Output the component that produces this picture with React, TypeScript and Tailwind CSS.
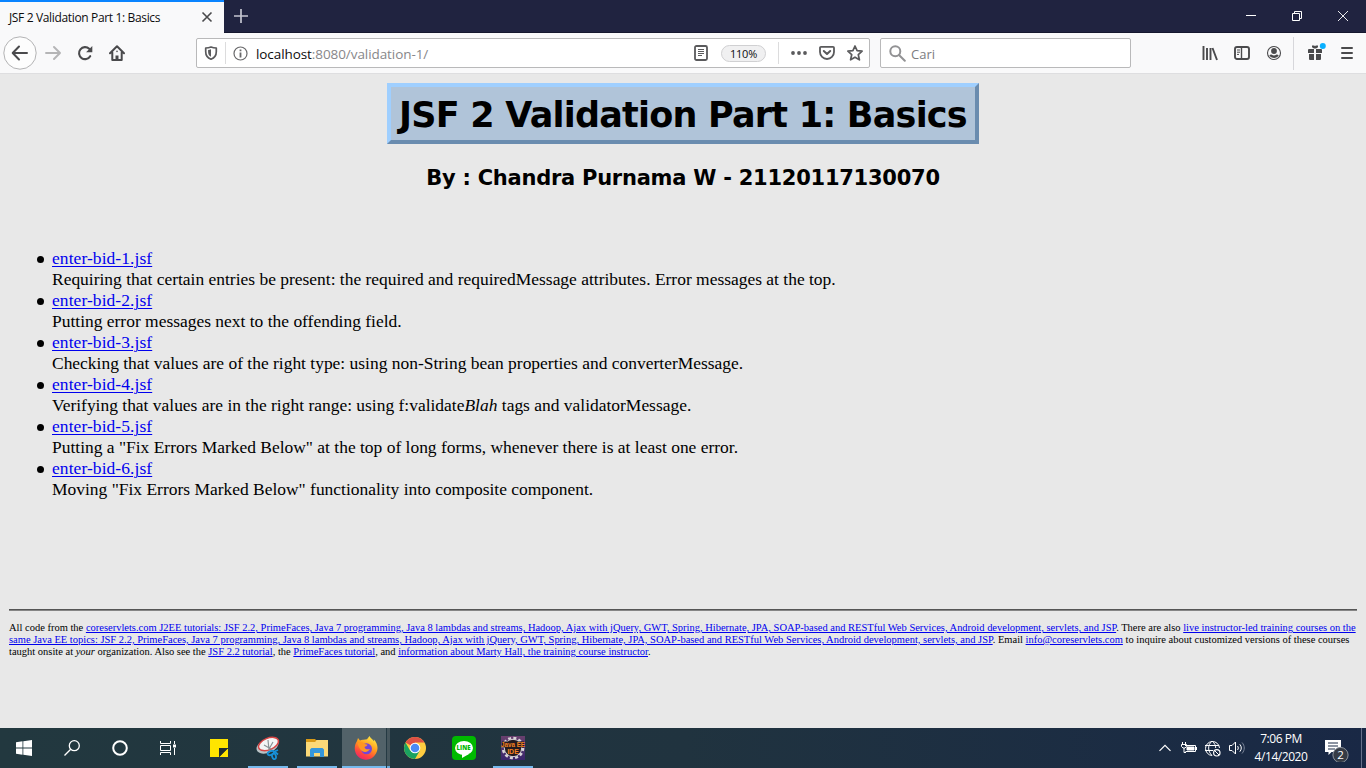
import React from "react";

const PAGE_FONT = "font-['Liberation_Serif',serif]";
const UI_FONT = "font-['Open_Sans','Noto_Sans',sans-serif]";

function Link({ offset = "underline-offset-2", children }: { offset?: string; children: React.ReactNode }) {
  return (
    <a href="#" className={`text-[#0000ee] underline decoration-1 ${offset}`}>
      {children}
    </a>
  );
}

function SmallLink({ children }: { children: React.ReactNode }) {
  return <Link offset="underline-offset-1">{children}</Link>;
}

function Cell({ className = "w-8", children }: { className?: string; children: React.ReactNode }) {
  return <div className={`flex h-full shrink-0 items-center justify-center ${className}`}>{children}</div>;
}

function TabStrip() {
  return (
    <header className="flex h-[33px] shrink-0 border-b border-[#15172e] bg-[#202340]">
      <div className="-mb-px flex w-[224px] items-center border-t-2 border-[#0a84ff] bg-[#f9f9fa]">
        <span className="ml-[9px] w-[190px] whitespace-nowrap pt-px text-[12px] tracking-[-0.35px] text-[#0c0c0d]">
          JSF 2 Validation Part 1: Basics
        </span>
        <svg width="16" height="16" viewBox="0 0 16 16" stroke="#4a4a4c" strokeWidth="1.6">
          <path d="M3.5 2.5l9 9M12.5 2.5l-9 9" />
        </svg>
      </div>
      <svg className="ml-[9px] mt-[8px]" width="16" height="16" viewBox="0 0 16 16" stroke="#c4c5d0" strokeWidth="1.7">
        <path d="M8 1v14M1 8h14" />
      </svg>
      <div className="ml-auto flex items-center text-white">
        <Cell className="w-[46px]">
          <svg width="10" height="10" stroke="white" fill="none"><path d="M0 4.5h10" /></svg>
        </Cell>
        <Cell className="w-[46px]">
          <svg width="10" height="10" stroke="white" fill="none"><path d="M.5 2.5h7v7h-7zM2.5 2.5v-2h7v7h-2" /></svg>
        </Cell>
        <Cell className="w-[46px]">
          <svg width="10" height="10" stroke="white" fill="none" strokeWidth=".9"><path d="M0 0l10 10M10 0L0 10" /></svg>
        </Cell>
      </div>
    </header>
  );
}

function Toolbar() {
  return (
    <nav className="flex h-[41px] shrink-0 items-center border-b border-[#dedee0] bg-[#f9f9fa] pl-1">
      <Cell className="w-[33px] pr-[2px]">
        <svg className="shrink-0" width="34" height="34" viewBox="0 0 34 34" fill="none">
          <circle cx="17" cy="17" r="16.2" fill="#fdfdfd" stroke="#b3b3b4" />
          <path d="M24 17H10.500M16 10.500L9.700 17L16 23.500" stroke="#4a4a4c" strokeWidth="2" strokeLinecap="round" strokeLinejoin="round" />
        </svg>
      </Cell>
      <Cell>
        <svg width="16" height="16" viewBox="0 0 16 16" fill="none" stroke="#b5b5b6" strokeWidth="1.9" strokeLinecap="round" strokeLinejoin="round">
          <path d="M1 8h13.500M9 2l6 6-6 6" />
        </svg>
      </Cell>
      <Cell>
        <svg width="16" height="16" viewBox="0 0 16 16" fill="none">
          <path d="M13.200 11.200A6 6 0 1 1 12.200 3.800" stroke="#4a4a4c" strokeWidth="2.100" strokeLinecap="round" />
          <path d="M15.300 1v6.200H9.100z" fill="#4a4a4c" />
        </svg>
      </Cell>
      <Cell>
        <svg width="16" height="16" viewBox="0 0 16 16" fill="none" stroke="#4a4a4c" strokeWidth="2" strokeLinecap="round" strokeLinejoin="round">
          <path d="M1 8.200L8 1.200l7 7M3.300 7.500V15h9.400V7.500" />
          <path d="M8 14V10.500" strokeWidth="3" strokeLinecap="butt" />
          <path d="M8 6.200v.3" strokeWidth="1.500" />
        </svg>
      </Cell>
      <div className="ml-[63px] flex h-[30px] w-[674px] items-center rounded-[2px] border border-[#b9b9ba] bg-white">
        <Cell className="w-7">
          <svg width="14" height="14" viewBox="0 0 14 14" fill="none" stroke="#5a5a5c">
            <path d="M7 1C5.300 1.700 3.500 2 1.700 2v3.800C1.700 9.300 3.700 12 7 13.200c3.300-1.200 5.300-3.900 5.300-7.400V2C10.500 2 8.700 1.700 7 1z" strokeWidth="1.700" strokeLinejoin="round" />
            <path d="M7 3.300v7.500C5.200 9.800 4.100 8.100 4.100 5.900V4C5.200 3.900 6.200 3.700 7 3.300z" fill="#5a5a5c" stroke="none" />
          </svg>
        </Cell>
        <div className="h-[22px] w-px bg-[#dcdcdd]" />
        <Cell className="w-7">
          <svg width="15" height="15" viewBox="0 0 15 15" fill="none" stroke="#68686a">
            <circle cx="7.500" cy="7.500" r="6.500" strokeWidth="1.200" />
            <path d="M7.500 6.500v5M7.500 3.500v1.700" strokeWidth="1.800" />
          </svg>
        </Cell>
        <span className="ml-[2px] w-[435px] whitespace-nowrap pt-[3px] text-[13.500px] tracking-[-0.08px] text-[#0c0c0d]">
          localhost<span className="text-[#87878a]">:8080/validation-1/</span>
        </span>
        <Cell className="w-5">
          <svg width="14" height="16" viewBox="0 0 14 16" fill="none" stroke="#5a5a5c">
            <rect x="1" y="1" width="12" height="14" rx="1.500" strokeWidth="1.800" />
            <path d="M4 4.500h6M4 6.500h6M4 8.500h6M4 10.500h4" />
          </svg>
        </Cell>
        <span className="ml-[10px] flex h-[17px] w-[45px] items-center justify-center rounded-full border border-[#d0d0d2] bg-[#f0f0f1] pt-[2px] text-[11px] tracking-[-0.2px] text-[#0c0c0d]">
          110%
        </span>
        <div className="ml-3 h-[22px] w-px bg-[#dcdcdd]" />
        <Cell className="ml-[6px] w-7">
          <svg width="16" height="16" viewBox="0 0 16 16" fill="#5a5a5c">
            <circle cx="2" cy="8" r="1.900" /><circle cx="8" cy="8" r="1.900" /><circle cx="14" cy="8" r="1.900" />
          </svg>
        </Cell>
        <Cell className="w-7">
          <svg width="16" height="16" viewBox="0 0 16 16" fill="none" stroke="#5a5a5c" strokeLinecap="round" strokeLinejoin="round">
            <path d="M2 1.800h12a1 1 0 0 1 1 1V7a7 7 0 0 1-14 0V2.800a1 1 0 0 1 1-1z" strokeWidth="1.800" />
            <path d="M4.800 6L8 9l3.200-3" strokeWidth="2" />
          </svg>
        </Cell>
        <Cell className="w-7">
          <svg width="16" height="16" viewBox="0 0 16 16" fill="none" stroke="#5a5a5c" strokeWidth="1.700" strokeLinejoin="round">
            <path d="M8 1l2.100 4.700 5 .5-3.800 3.500 1.100 5.100L8 12.200l-4.400 2.600 1.100-5.100L.9 6.200l5-.5z" />
          </svg>
        </Cell>
      </div>
      <div className="ml-[10px] flex h-[30px] w-[251px] items-center rounded-[2px] border border-[#b9b9ba] bg-white">
        <svg className="ml-2" width="17" height="17" viewBox="0 0 17 17" fill="none" stroke="#929294" strokeWidth="2" strokeLinecap="round">
          <circle cx="6.300" cy="6.300" r="5" /><path d="M10 10l5.800 5.800" />
        </svg>
        <span className="ml-[5px] pt-[3px] text-[13px] text-[#7c7c7f]">Cari</span>
      </div>
      <Cell className="ml-[63px] w-8">
        <svg width="16" height="16" viewBox="0 0 16 16" fill="none" stroke="#4a4a4c" strokeWidth="1.900">
          <path d="M1.500 1v14M5 3v12M8.500 3v12M10.500 3l4.500 12" />
        </svg>
      </Cell>
      <Cell>
        <svg width="16" height="16" viewBox="0 0 16 16" fill="none" stroke="#4a4a4c">
          <rect x="1" y="2" width="14" height="12" rx="2" strokeWidth="1.900" />
          <path d="M7.500 2v12" strokeWidth="1.400" /><path d="M3 5h3M3 7.200h3M3 9.400h2" />
        </svg>
      </Cell>
      <Cell>
        <svg width="16" height="16" viewBox="0 0 16 16" fill="none">
          <circle cx="8" cy="8" r="6.500" stroke="#4a4a4c" strokeWidth="1.100" />
          <circle cx="8" cy="6" r="2.900" fill="#4a4a4c" />
          <path d="M3.300 10.300c1.300-.8 1.700-.8 2.500-.5 1.300.8 3.100.8 4.400 0 .8-.3 1.200-.3 2.500.5-1.800 3.600-7.500 3.600-9.400 0z" fill="#4a4a4c" />
        </svg>
      </Cell>
      <div className="ml-[3px] h-[33px] w-px bg-[#d7d7db]" />
      <Cell className="ml-[5px] w-8">
        <svg className="overflow-visible" width="16" height="16" viewBox="0 0 16 16" fill="#4a4a4c">
          <path d="M2 4h5v4H1V5a1 1 0 0 1 1-1zM9 4h5a1 1 0 0 1 1 1v3H9zM2 9h5v6H3a1 1 0 0 1-1-1zM9 9h5v5a1 1 0 0 1-1 1H9zM5 0.500h2.200L8 1.300l.8-.8H11v1.800L9 3.500H7L5 2.300z" />
          <circle cx="15.800" cy="1" r="3" fill="#0ab0ff" />
        </svg>
      </Cell>
      <Cell>
        <svg width="12" height="14" viewBox="0 0 12 14" stroke="#4a4a4c" strokeWidth="2" strokeLinecap="round">
          <path d="M1 2h10M1 7h10M1 12h10" />
        </svg>
      </Cell>
    </nav>
  );
}

const items: { name: string; text: React.ReactNode }[] = [
  { name: "enter-bid-1.jsf", text: "Requiring that certain entries be present: the required and requiredMessage attributes. Error messages at the top." },
  { name: "enter-bid-2.jsf", text: "Putting error messages next to the offending field." },
  { name: "enter-bid-3.jsf", text: "Checking that values are of the right type: using non-String bean properties and converterMessage." },
  { name: "enter-bid-4.jsf", text: <>Verifying that values are in the right range: using f:validate<i>Blah</i> tags and validatorMessage.</> },
  { name: "enter-bid-5.jsf", text: 'Putting a "Fix Errors Marked Below" at the top of long forms, whenever there is at least one error.' },
  { name: "enter-bid-6.jsf", text: 'Moving "Fix Errors Marked Below" functionality into composite component.' },
];

function Page() {
  return (
    <main className={`flex min-h-0 flex-1 flex-col bg-[#e8e8e8] px-[9px] pt-[9px] text-black ${PAGE_FONT}`}>
      <h1 className="flex h-[61px] w-[592px] items-center justify-center self-center whitespace-nowrap border-4 border-t-[#9fcfff] border-r-[#6a8caf] border-b-[#6a8caf] border-l-[#9fcfff] bg-[#b0c4d9] pt-[3px] font-['DejaVu_Sans',sans-serif] text-[35px] font-bold tracking-[-0.78px]">
        JSF 2 Validation Part 1: Basics
      </h1>
      <h2 className="mt-[20px] h-7 self-center whitespace-nowrap font-['DejaVu_Sans',sans-serif] text-[21px] font-bold leading-7 tracking-[-0.25px]">
        By : Chandra Purnama W - 21120117130070
      </h2>
      <ul className="mt-[56px] text-[17.470px] leading-[21px]">
        {items.map((item) => (
          <li key={item.name} className="flex whitespace-nowrap">
            <span className="ml-7 mt-[8px] mr-2 h-[7px] w-[7px] shrink-0 rounded-full bg-black" />
            <div>
              <p className="tracking-[0.08px]"><Link>{item.name}</Link></p>
              <p>{item.text}</p>
            </div>
          </li>
        ))}
      </ul>
      <div className="mt-[109px] h-[2px] shrink-0 border-t border-[#555] bg-[#858585]" />
      <footer className="mt-[11px] whitespace-nowrap text-[10.490px] leading-3">
        <p>
          All code from the <SmallLink>coreservlets.com J2EE tutorials: JSF 2.2, PrimeFaces, Java 7 programming, Java 8 lambdas and streams, Hadoop, Ajax with jQuery, GWT, Spring, Hibernate, JPA, SOAP-based and RESTful Web Services, Android development, servlets, and JSP</SmallLink>. There are also <SmallLink>live instructor-led training courses on the</SmallLink>
        </p>
        <p>
          <SmallLink>same Java EE topics: JSF 2.2, PrimeFaces, Java 7 programming, Java 8 lambdas and streams, Hadoop, Ajax with jQuery, GWT, Spring, Hibernate, JPA, SOAP-based and RESTful Web Services, Android development, servlets, and JSP</SmallLink>. Email <SmallLink>info@coreservlets.com</SmallLink> to inquire about customized versions of these courses
        </p>
        <p>
          taught onsite at <i>your</i> organization. Also see the <SmallLink>JSF 2.2 tutorial</SmallLink>, the <SmallLink>PrimeFaces tutorial</SmallLink>, and <SmallLink>information about Marty Hall, the training course instructor</SmallLink>.
        </p>
      </footer>
    </main>
  );
}

function AppButton({ open = false, children }: { open?: boolean; children: React.ReactNode }) {
  return (
    <div className="flex h-10 w-[49px] shrink-0 flex-col items-center">
      <div className="flex h-[38px] items-center pt-[2px]">{children}</div>
      {open && <div className="h-[2px] w-10 bg-[#76b9ed]" />}
    </div>
  );
}

function Taskbar() {
  return (
    <footer className={`flex h-10 shrink-0 bg-linear-to-r from-[#22383f] via-[#20333f] via-50% to-[#192845] text-white ${UI_FONT}`}>
      <Cell className="w-12">
        <svg width="16" height="16" viewBox="0 0 16 16" fill="white">
          <path d="M0 2.200l6.500-.9v6.200H0zM7.300 1.200L16 0v7.500H7.300zM0 8.400h6.500v6.300L0 13.800zM7.300 8.400H16V16l-8.700-1.200z" />
        </svg>
      </Cell>
      <Cell className="w-12">
        <svg width="16" height="16" viewBox="0 0 16 16" fill="none" stroke="white" strokeWidth="1.300">
          <circle cx="10.300" cy="5.700" r="5" /><path d="M6.700 9.300L.5 15.500" />
        </svg>
      </Cell>
      <Cell className="w-12">
        <svg width="16" height="16" viewBox="0 0 16 16" fill="none" stroke="white" strokeWidth="2">
          <circle cx="8" cy="8" r="6.800" />
        </svg>
      </Cell>
      <Cell className="w-12">
        <svg width="16" height="16" viewBox="0 0 16 16" fill="none" stroke="white">
          <path d="M.5 1v2.500h10V1M.5 15v-2.500h10V15M.5 5.500h10v5H.5zM14.500 1v3M14.500 8v7" />
          <path d="M13 6h3" strokeWidth="3" />
        </svg>
      </Cell>
      <div className="ml-[2px] flex">
        <AppButton>
          <svg width="18" height="18" viewBox="0 0 18 18">
            <path d="M0 0h18v18H0z" fill="#ffe500" />
            <path d="M9 9h9v.5L9.500 18H9z" fill="#1f2d30" />
            <path d="M18 9.800V18H9.800z" fill="#ffe500" />
          </svg>
        </AppButton>
        <AppButton open>
          <svg width="24" height="24" viewBox="0 0 24 24" fill="none">
            <ellipse cx="11.500" cy="10" rx="11.500" ry="6.800" transform="rotate(-22 11.500 10)" fill="#b9c3c6" />
            <ellipse cx="12.500" cy="8" rx="10.500" ry="5.800" transform="rotate(-22 12.500 8)" fill="#f3f5f5" stroke="#d74545" strokeWidth="1.500" />
            <path d="M8 9l7 4M12 4l1 10M17 6l-4 7" stroke="#8b9396" strokeWidth="1.200" />
            <g stroke="#1790d8" strokeWidth="1.800"><ellipse cx="14.800" cy="17" rx="3.300" ry="1.900" transform="rotate(-22 14.800 17)" /><ellipse cx="18" cy="20.300" rx="1.900" ry="2.900" transform="rotate(-15 18 20.300)" /><path d="M17 16l5-2" /><path d="M18.500 15.500l3.500 3" /></g>
          </svg>
        </AppButton>
        <AppButton open>
          <svg width="22" height="20" viewBox="0 0 22 20">
            <path d="M0 2h22v16.500H0z" fill="#fbd978" /><path d="M0 1h9l1.500 1.500L9 4H0z" fill="#d99a17" />
            <path d="M4 19v-7.500L5.500 10h11l1.500 1.500V19h-4v-4H8v4z" fill="#3597db" />
          </svg>
        </AppButton>
        <div className="flex w-[49px] justify-center pl-px">
          <div className="flex h-10 w-[44px] flex-col items-center border-b-2 border-[#76b9ed] bg-[#526269] pl-[3px] pt-2">
            <svg className="shrink-0" width="24" height="24" viewBox="0 0 24 24">
              <defs>
                <linearGradient id="fox" x1=".8" y1="0" x2=".3" y2="1"><stop stopColor="#fff04a" /><stop offset=".45" stopColor="#ff9b1c" /><stop offset=".75" stopColor="#ff4a3c" /><stop offset="1" stopColor="#ef2269" /></linearGradient>
              </defs>
              <path d="M3 5l1-3 2 2.500c1-.6 2-.8 3.500-.7L13 3.200 15.500 0c.5 2 3 3.200 4.500 5.200 0-.8 0-1.400-.3-2C24 7.500 24.500 13 22 17.500 19.500 22 15.500 24 11.500 23.700 4.500 23.200.3 17.500.8 11.500.9 9 1.800 6.800 3 5z" fill="url(#fox)" />
              <circle cx="12.500" cy="12.800" r="5.500" fill="#7346d8" />
              <path d="M3.500 7.500c3-2 5.500-1.200 7 .5 1 .2 2 .2 3 .7-.5 1.300-1.700 1.700-3 2.300.5 2 2.500 3 5.500 1.800-1.300 3-5 4-8 2.200-2-1.300-3.500-4.500-4.500-7.500z" fill="#ff9722" />
            </svg>
          </div>
          <div className="h-10 w-px bg-[#253a43]" />
          <div className="h-10 w-[3px] border-b-2 border-[#6aa8d7] bg-[#46565d]" />
        </div>
        <AppButton>
          <svg width="22" height="22" viewBox="0 0 22 22">
            <circle cx="11" cy="11" r="11" fill="#ffcd40" />
            <path d="M11 11L1.500 5.500A11 11 0 0 1 20.500 5.500H11z" fill="#de5145" />
            <path d="M1.500 5.500A11 11 0 0 0 11 22l4.700-8.300L11 11 6.200 13.700z" fill="#1aa260" />
            <circle cx="11" cy="11" r="5.300" fill="white" /><circle cx="11" cy="11" r="4.300" fill="#4a8af4" />
          </svg>
        </AppButton>
        <AppButton>
          <div className="flex h-6 w-6 items-center justify-center rounded-[4px] bg-[#00b900]">
            <div className="relative flex h-[14px] w-[18px] items-center justify-center rounded-[50%] bg-white">
              <svg className="absolute left-[7px] top-[12px]" width="7" height="5"><path d="M0 0v5l7-4z" fill="white" /></svg>
              <span className="text-[6px] font-extrabold leading-none text-[#00b900]">LINE</span>
            </div>
          </div>
        </AppButton>
        <AppButton open>
          <div className="relative h-6 w-6 bg-linear-to-b from-[#69406e] to-[#39256b]">
            <svg className="overflow-visible" width="24" height="24" viewBox="0 0 24 24" fill="#231a20">
              <circle cx="12" cy="12" r="10" fill="none" stroke="#d8d4d8" strokeWidth="2.600" strokeDasharray="3 2.240" />
              <circle cx="12" cy="12" r="8.700" stroke="#d8d4d8" strokeWidth="1" />
              <path d="M1 5.500h22v6H1z" />
              <g fill="#f58220" fontFamily="Liberation Sans, sans-serif" fontWeight="700" fontSize="7" textAnchor="middle">
                <text x="12" y="11" textLength="24" lengthAdjust="spacingAndGlyphs">Java EE</text>
                <text x="12" y="18">IDE</text>
              </g>
            </svg>
          </div>
        </AppButton>
      </div>
      <div className="ml-auto flex h-full items-center">
        <Cell className="w-4">
          <svg width="12" height="8" viewBox="0 0 12 8" fill="none" stroke="white" strokeWidth="1.200"><path d="M.5 6.800L6 1.300l5.500 5.500" /></svg>
        </Cell>
        <Cell className="ml-2 w-4">
          <svg width="16" height="14" viewBox="0 0 16 14" fill="none" stroke="white">
            <path d="M4 4.500h10.500v6H4.500M15.500 6v3" /><path d="M6 6h7v3H6z" fill="white" />
            <path d="M1.500 1v2M4.500 1v2M.5 3.500h5v2L4 7H2L.5 5.500zM3 7v4.500h2" />
          </svg>
        </Cell>
        <Cell className="ml-[7px] w-[17px]">
          <svg width="17" height="17" viewBox="0 0 17 17" fill="none" stroke="white">
            <path d="M15.500 8A7 7 0 1 0 8 15.500M1 5.500h14M1 10.500h8M8 1C3.500 5 3.500 11 8 15.500M8 1c2.700 2.300 3.700 4.500 3.700 7" />
            <circle cx="12.800" cy="12.800" r="3.200" strokeWidth="1.200" /><path d="M10.700 10.700l4.300 4.300" />
          </svg>
        </Cell>
        <Cell className="ml-2 w-4">
          <svg width="16" height="14" viewBox="0 0 16 14" fill="none" stroke="white">
            <path d="M.5 4.500H3L6.500 1v12L3 9.500H.5z" /><path d="M8.500 5c1 1.200 1 2.800 0 4M10.800 3.300c2 2.200 2 5.200 0 7.400" /><path d="M13 1.500c3 3.300 3 7.700 0 11" stroke="#7d879b" />
          </svg>
        </Cell>
        <div className="ml-[5px] flex w-[62px] flex-col items-center whitespace-nowrap pb-px text-[12px] leading-[18px] tracking-[-0.45px]">
          <span>7:06 PM</span><span>4/14/2020</span>
        </div>
        <svg className="ml-[13px]" width="25" height="28" viewBox="0 0 25 28" fill="none">
          <path d="M0 6h16v12H6.500L3.500 21v-3H0z" fill="white" /><path d="M3 9h10M3 12h10M3 15h7" stroke="#1b2b47" />
          <circle cx="15.500" cy="21" r="7.600" fill="#353b45" stroke="#8b929c" />
          <text x="15.500" y="25" textAnchor="middle" fontSize="11.500" fill="white">2</text>
        </svg>
        <div className="ml-[11px] mr-[4px] h-10 w-px bg-[#66708a]" />
      </div>
    </footer>
  );
}

export default function App() {
  return (
    <div className={`flex h-screen w-screen flex-col overflow-hidden ${UI_FONT}`}>
      <TabStrip />
      <Toolbar />
      <Page />
      <Taskbar />
    </div>
  );
}
